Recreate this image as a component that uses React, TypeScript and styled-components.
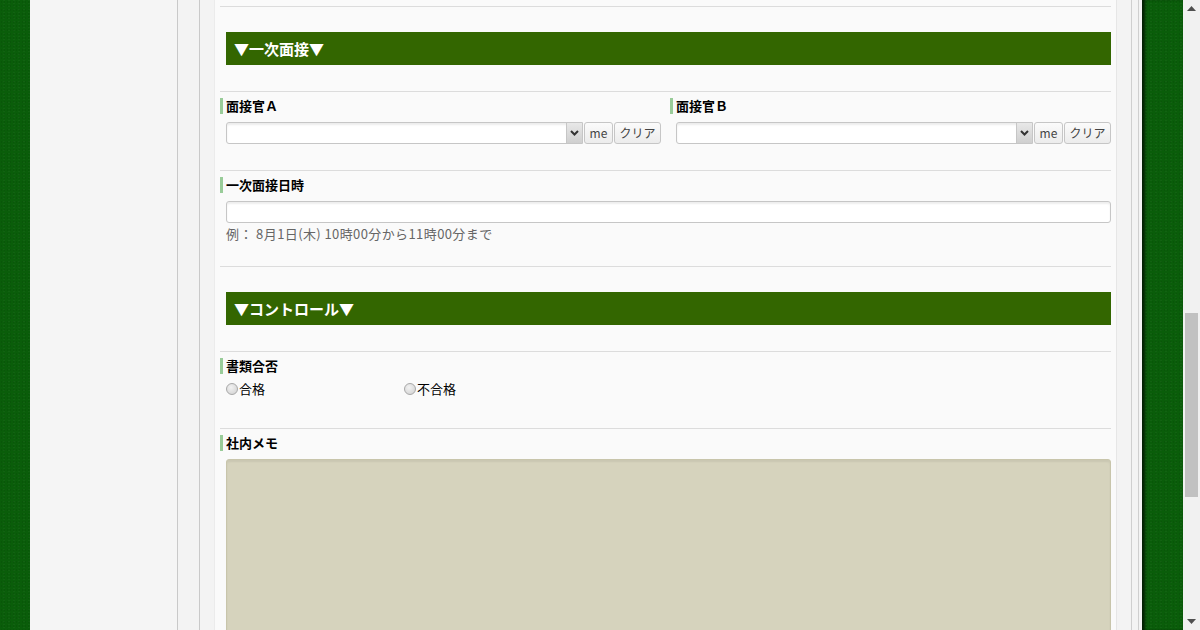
import React from 'react'
import styled, { createGlobalStyle } from 'styled-components'

const GlobalStyle = createGlobalStyle`
  html, body {
    margin: 0;
    padding: 0;
    height: 100%;
    overflow: hidden;
  }
  body {
    font-family: 'Noto Sans CJK JP', 'Noto Sans', sans-serif;
    color: #000;
  }
  * {
    box-sizing: border-box;
  }
`

const JP = `'Noto Sans CJK JP', 'Noto Sans', sans-serif`

const Screen = styled.div`
  display: flex;
  width: 1200px;
  height: 630px;
  overflow: hidden;
`

const Felt = styled.div<{ $w: number; $shadow?: boolean }>`
  flex: 0 0 ${(p) => p.$w}px;
  background-color: #0a5d0a;
  background-image: radial-gradient(rgba(0, 0, 0, 0.07) 1px, transparent 1px),
    radial-gradient(rgba(255, 255, 255, 0.03) 1px, transparent 1px);
  background-size: 3px 4px, 5px 3px;
  background-position: 0 0, 1px 2px;
  box-shadow: ${(p) => (p.$shadow ? 'inset 4px 0 3px -1px rgba(0,0,0,0.65)' : 'none')};
`

const Page = styled.div`
  flex: 0 0 1112px;
  display: flex;
  background: #f5f5f5;
`

const SideNav = styled.div`
  flex: 0 0 148px;
  border-right: 1px solid #c9c9c9;
  background: #f5f5f5;
`

const Gutter = styled.div`
  flex: 0 0 22px;
  border-right: 1px solid #c9c9c9;
  background: #f3f3f3;
`

const Main = styled.div`
  flex: 1;
  display: flex;
  padding-left: 14px;
  background: #f3f3f3;
`

const Panel = styled.div`
  flex: 0 0 903px;
  background: #fafafa;
  border-left: 1px solid #ebebeb;
  border-right: 1px solid #e6e6e6;
  padding: 6px 5px 0 5px;
`

const RightRail = styled.div`
  flex: 1;
  display: flex;
  padding-left: 14px;
`

const RailLine = styled.div<{ $gap: number }>`
  flex: 0 0 ${(p) => p.$gap}px;
  border-left: 1px solid #cfcfcf;
`

const HeadingRow = styled.div`
  border-top: 1px solid #dcdcdc;
  padding: 25px 0 26px 6px;
`

const HeadingBar = styled.div`
  height: 33px;
  background: #336600;
  color: #fff;
  font-family: ${JP};
  font-size: 15px;
  font-weight: 700;
  line-height: 33px;
  padding-left: 8px;
`

const FieldRow = styled.div<{ $pb: number }>`
  border-top: 1px solid #dcdcdc;
  padding: 6px 0 ${(p) => p.$pb}px 0;
`

const Columns = styled.div`
  display: grid;
  grid-template-columns: 441px 441px;
  column-gap: 9px;
`

const Label = styled.div`
  height: 16px;
  border-left: 3px solid #99cc99;
  padding-left: 3px;
  font-family: ${JP};
  font-size: 13px;
  font-weight: 700;
  line-height: 16px;
  color: #000;
`

const Control = styled.div`
  margin: 8px 0 0 6px;
`

const PickerLine = styled.div`
  display: flex;
  height: 22px;
  gap: 1px;
`

const SelectBox = styled.div`
  flex: 1;
  display: flex;
  border: 1px solid #c6c6c6;
  border-radius: 3px 0 0 3px;
  background: #fff;
  box-shadow: inset 0 2px 2px rgba(0, 0, 0, 0.08);
  overflow: hidden;
`

const SelectValue = styled.div`
  flex: 1;
`

const SelectArrow = styled.div`
  flex: 0 0 16px;
  display: flex;
  align-items: center;
  justify-content: center;
  background: linear-gradient(#e8e8e8, #cfcfcf);
  border-left: 1px solid #c6c6c6;
`

const SmallButton = styled.button<{ $w: number }>`
  flex: 0 0 ${(p) => p.$w}px;
  height: 22px;
  padding: 0;
  border: 1px solid #c6c6c6;
  border-radius: 3px;
  background: linear-gradient(#fbfbfb, #ececec);
  font-family: ${JP};
  font-size: 12px;
  line-height: 20px;
  color: #444;
`

const TextInput = styled.div`
  height: 22px;
  border: 1px solid #c6c6c6;
  border-radius: 3px;
  background: #fff;
  box-shadow: inset 0 2px 2px rgba(0, 0, 0, 0.07);
`

const Hint = styled.div`
  margin-top: 3px;
  font-family: ${JP};
  font-size: 13px;
  line-height: 16px;
  letter-spacing: 0.4px;
  color: #666;
`

const RadioGroup = styled.div`
  display: flex;
  margin: 7px 0 0 6px;
`

const RadioItem = styled.label`
  flex: 0 0 178px;
  display: flex;
  align-items: center;
  font-family: ${JP};
  font-size: 13px;
  line-height: 16px;
  color: #000;
`

const RadioDot = styled.span`
  width: 12px;
  height: 12px;
  border-radius: 50%;
  border: 1px solid #a8a8a8;
  background: radial-gradient(circle at 40% 35%, #f2f2f2, #cfcfcf);
  margin-right: 1px;
`

const Memo = styled.div`
  margin: 8px 0 0 6px;
  height: 260px;
  background: #d6d3bd;
  border: 1px solid #c8c5ab;
  border-radius: 3px;
  box-shadow: inset 0 2px 2px rgba(0, 0, 0, 0.06);
`

const Scrollbar = styled.div`
  flex: 0 0 17px;
  display: flex;
  flex-direction: column;
  background: #f1f1f1;
`

const ScrollArrow = styled.div`
  flex: 0 0 17px;
  display: flex;
  align-items: center;
  justify-content: center;
`

const Track = styled.div`
  flex: 1;
  padding: 0 2px;
`

const Thumb = styled.div<{ $top: number; $h: number }>`
  margin-top: ${(p) => p.$top}px;
  height: ${(p) => p.$h}px;
  background: #c1c1c1;
`

const Chevron = () => (
  <svg width="9" height="6" viewBox="0 0 9 6">
    <path d="M1 1 L4.5 4.5 L8 1" fill="none" stroke="#333" strokeWidth="2" />
  </svg>
)

const Picker: React.FC = () => (
  <Control>
    <PickerLine>
      <SelectBox>
        <SelectValue />
        <SelectArrow>
          <Chevron />
        </SelectArrow>
      </SelectBox>
      <SmallButton $w={29}>me</SmallButton>
      <SmallButton $w={47}>クリア</SmallButton>
    </PickerLine>
  </Control>
)

const App: React.FC = () => {
  return (
    <>
      <GlobalStyle />
      <Screen>
        <Felt $w={30} />
        <Page>
          <SideNav />
          <Gutter />
          <Main>
            <Panel>
              <HeadingRow>
                <HeadingBar>▼一次面接▼</HeadingBar>
              </HeadingRow>

              <FieldRow $pb={26}>
                <Columns>
                  <div>
                    <Label>面接官Ａ</Label>
                    <Picker />
                  </div>
                  <div>
                    <Label>面接官Ｂ</Label>
                    <Picker />
                  </div>
                </Columns>
              </FieldRow>

              <FieldRow $pb={24}>
                <Label>一次面接日時</Label>
                <Control>
                  <TextInput />
                  <Hint>例： 8月1日(木) 10時00分から11時00分まで</Hint>
                </Control>
              </FieldRow>

              <HeadingRow>
                <HeadingBar>▼コントロール▼</HeadingBar>
              </HeadingRow>

              <FieldRow $pb={31}>
                <Label>書類合否</Label>
                <RadioGroup>
                  <RadioItem>
                    <RadioDot />
                    合格
                  </RadioItem>
                  <RadioItem>
                    <RadioDot />
                    不合格
                  </RadioItem>
                </RadioGroup>
              </FieldRow>

              <FieldRow $pb={0}>
                <Label>社内メモ</Label>
                <Memo />
              </FieldRow>
            </Panel>
            <RightRail>
              <RailLine $gap={7} />
              <RailLine $gap={4} />
            </RightRail>
          </Main>
        </Page>
        <Felt $w={41} $shadow />
        <Scrollbar>
          <ScrollArrow>
            <svg width="9" height="5" viewBox="0 0 9 5">
              <polygon points="0,5 4.5,0 9,5" fill="#505050" />
            </svg>
          </ScrollArrow>
          <Track>
            <Thumb $top={296} $h={184} />
          </Track>
          <ScrollArrow>
            <svg width="9" height="5" viewBox="0 0 9 5">
              <polygon points="0,0 4.5,5 9,0" fill="#505050" />
            </svg>
          </ScrollArrow>
        </Scrollbar>
      </Screen>
    </>
  )
}

export default App
